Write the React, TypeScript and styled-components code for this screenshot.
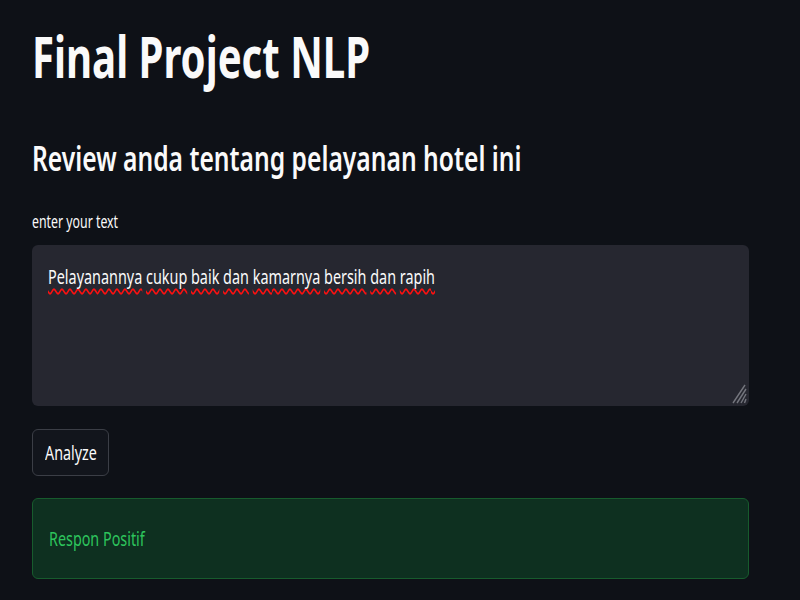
import styled, { createGlobalStyle } from "styled-components";

const GlobalStyle = createGlobalStyle`
  html, body {
    margin: 0;
    padding: 0;
    background: #0e1117;
  }
  body {
    font-family: "Noto Sans", "Open Sans", sans-serif;
    color: #fafafa;
  }
`;

const reviewText = "Pelayanannya cukup baik dan kamarnya bersih dan rapih";

function ResizeGrip() {
  return (
    <GripIcon width="16" height="20" viewBox="0 0 16 20">
      <line x1="14" y1="1" x2="2" y2="19" stroke="#74767e" strokeWidth="1.4" />
      <line x1="15" y1="5" x2="6" y2="19" stroke="#74767e" strokeWidth="1.4" />
      <line x1="15" y1="10" x2="10" y2="19" stroke="#74767e" strokeWidth="1.4" />
      <line x1="15" y1="15" x2="13.5" y2="19" stroke="#74767e" strokeWidth="1.4" />
    </GripIcon>
  );
}

function App() {
  const words = reviewText.split(" ");

  return (
    <Page>
      <GlobalStyle />
      <Title>
        <Squash $scale={0.704}>Final Project NLP</Squash>
      </Title>
      <SubTitle>
        <Squash $scale={0.725}>Review anda tentang pelayanan hotel ini</Squash>
      </SubTitle>
      <Label>
        <Squash $scale={0.685}>enter your text</Squash>
      </Label>
      <TextBox>
        <Squash $scale={0.72}>
          {words.map((w, i) => (
            <span key={i}>
              <Misspelled>{w}</Misspelled>
              {i < words.length - 1 ? " " : ""}
            </span>
          ))}
        </Squash>
        <ResizeGrip />
      </TextBox>
      <Button>
        <Squash $scale={0.715}>Analyze</Squash>
      </Button>
      <Alert>
        <Squash $scale={0.717}>Respon Positif</Squash>
      </Alert>
    </Page>
  );
}

export default App;

const Page = styled.div`
  display: flex;
  flex-direction: column;
  align-items: flex-start;
  width: 717px;
  padding: 0 51px 0 32px;
  height: 600px;
  overflow: hidden;
`;

const Squash = styled.span<{ $scale: number }>`
  display: inline-block;
  white-space: nowrap;
  transform: scaleX(${(p) => p.$scale});
  transform-origin: left center;
`;

const Title = styled.h1`
  margin: 22px 0 0;
  font-size: 57px;
  font-weight: 700;
  line-height: 68px;
`;

const SubTitle = styled.h2`
  margin: 46px 0 0;
  font-size: 34px;
  font-weight: 600;
  line-height: 44px;
`;

const Label = styled.label`
  margin-top: 29px;
  font-size: 18px;
  line-height: 24px;
  color: #fafafa;
`;

const TextBox = styled.div`
  position: relative;
  box-sizing: border-box;
  margin-top: 12px;
  width: 717px;
  height: 161px;
  background: #262730;
  border-radius: 6px;
  padding: 18px 16px;
  font-size: 20px;
  line-height: 28px;
  color: #fafafa;
`;

const Misspelled = styled.span`
  text-decoration: underline wavy #ff1010;
  text-decoration-thickness: 1.5px;
  text-underline-offset: 4px;
  text-decoration-skip-ink: none;
`;

const GripIcon = styled.svg`
  position: absolute;
  right: 2px;
  bottom: 2px;
`;

const Button = styled.button`
  margin-top: 23px;
  box-sizing: border-box;
  width: 77px;
  height: 47px;
  padding: 0 12px;
  text-align: left;
  background: #12151c;
  border: 1px solid #3b3e46;
  border-radius: 6px;
  color: #fafafa;
  font-family: "Noto Sans", "Open Sans", sans-serif;
  font-size: 20px;
  cursor: pointer;
`;

const Alert = styled.div`
  box-sizing: border-box;
  margin-top: 22px;
  width: 717px;
  height: 81px;
  display: flex;
  align-items: center;
  padding: 0 16px;
  background: #0e3020;
  border: 1px solid #175b2d;
  border-radius: 6px;
  color: #2dc45c;
  font-size: 20px;
`;
